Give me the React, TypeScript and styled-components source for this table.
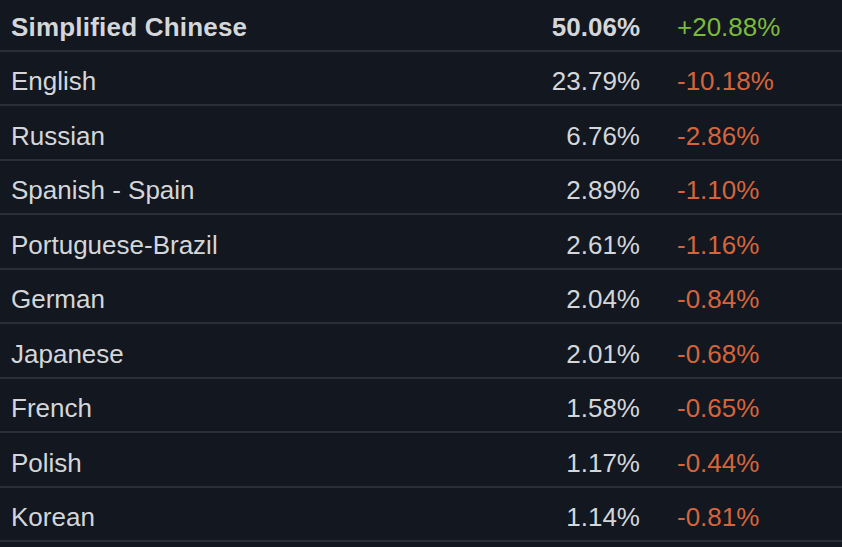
import styled, { createGlobalStyle } from 'styled-components';

interface ILangRow {
  name: string;
  share: string;
  change: string;
}

const rows: ILangRow[] = [
  { name: 'Simplified Chinese', share: '50.06%', change: '+20.88%' },
  { name: 'English', share: '23.79%', change: '-10.18%' },
  { name: 'Russian', share: '6.76%', change: '-2.86%' },
  { name: 'Spanish - Spain', share: '2.89%', change: '-1.10%' },
  { name: 'Portuguese-Brazil', share: '2.61%', change: '-1.16%' },
  { name: 'German', share: '2.04%', change: '-0.84%' },
  { name: 'Japanese', share: '2.01%', change: '-0.68%' },
  { name: 'French', share: '1.58%', change: '-0.65%' },
  { name: 'Polish', share: '1.17%', change: '-0.44%' },
  { name: 'Korean', share: '1.14%', change: '-0.81%' },
];

const GlobalStyle = createGlobalStyle`
  html, body {
    margin: 0;
    background: #121720;
  }
`;

const Table = styled.div`
  width: 842px;
  height: 547px;
  overflow: hidden;
  background: #121720;
  font-family: 'Liberation Sans', Arial, sans-serif;
  font-size: 26px;
  color: #d4d6d9;
  margin-top: -3px;
`;

const Row = styled.div<{ $top?: boolean }>`
  display: grid;
  grid-template-columns: 1fr 140px 202px;
  align-items: center;
  box-sizing: content-box;
  padding-top: 8px;
  height: 44.5px;
  border-bottom: 2px solid #2a2f37;
  font-weight: ${(p) => (p.$top ? 700 : 400)};
`;

const Name = styled.span<{ $top?: boolean }>`
  padding-left: 11px;
  letter-spacing: ${(p) => (p.$top ? '0.2px' : '0')};
`;

const Share = styled.span`
  text-align: right;
`;

const Change = styled.span<{ $up: boolean }>`
  padding-left: 37px;
  font-weight: 400;
  color: ${(p) => (p.$up ? '#7cba3c' : '#d6643b')};
`;

export default function App() {
  return (
    <>
      <GlobalStyle />
      <Table>
        {rows.map((r, i) => (
          <Row key={r.name} $top={i === 0}>
            <Name $top={i === 0}>{r.name}</Name>
            <Share>{r.share}</Share>
            <Change $up={r.change.startsWith('+')}>{r.change}</Change>
          </Row>
        ))}
      </Table>
    </>
  );
}
